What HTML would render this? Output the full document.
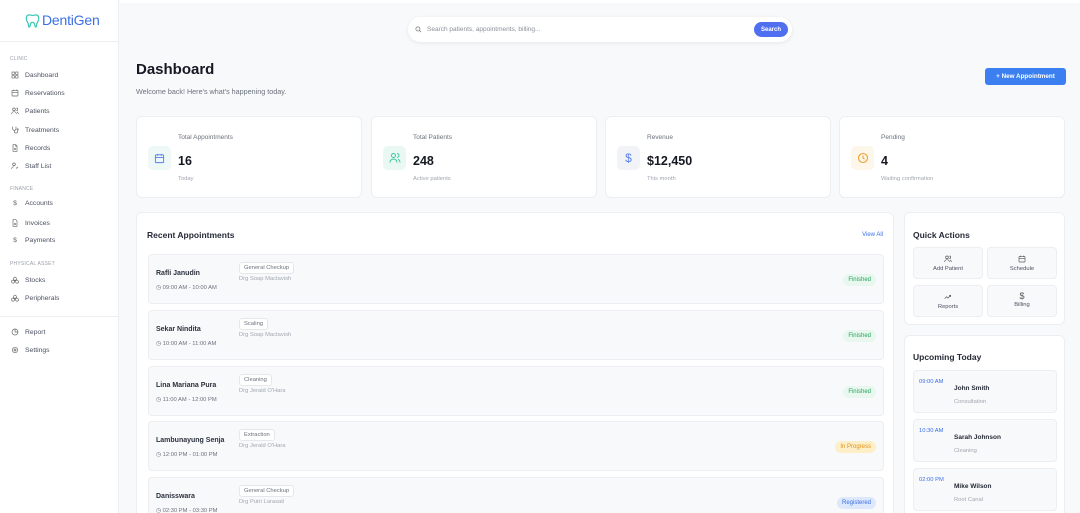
<!DOCTYPE html>
<html><head><meta charset="utf-8"><style>
*{box-sizing:border-box;margin:0;padding:0}
html,body{width:1080px;height:513px;overflow:hidden}
body{font-family:"Liberation Sans",sans-serif;background:#f8f9fb;position:relative;color:#1f2330}
.abs{position:absolute}
.sb{left:0;top:0;width:119px;height:513px;background:#fff;border-right:1px solid #eceef2}
.lbl{position:absolute;left:10px;font-size:5px;color:#9aa0aa;letter-spacing:.2px}
.it{position:absolute;left:11px;font-size:6.8px;color:#4b5160;display:flex;align-items:center;gap:6px}
.it svg{width:8px;height:8px}
.card{position:absolute;background:#fff;border:1px solid #eceef2;border-radius:6px}
.ib{position:absolute;left:11px;top:29px;width:23px;height:24px;border-radius:5px;display:flex;align-items:center;justify-content:center}
.sl{position:absolute;left:41px;top:17px;font-size:6.5px;color:#6b717d}
.sv{position:absolute;left:41px;top:37px;font-size:12.5px;font-weight:bold;color:#151822}
.ss{position:absolute;left:41px;top:59px;font-size:5.8px;color:#a1a6b0}
.row{position:absolute;left:11px;width:736px;height:50px;background:#f8f9fb;border:1px solid #eceef2;border-radius:4px}
.nm{position:absolute;left:7px;top:15px;font-size:7px;font-weight:bold;color:#2b303c}
.tm{position:absolute;left:7px;top:30px;font-size:5.8px;color:#6b717d;display:flex;align-items:center;gap:3px}
.tag{position:absolute;left:90px;top:7px;font-size:5.8px;color:#6b717d;background:#fff;border:1px solid #e5e7eb;border-radius:3px;padding:2px 4px}
.dr{position:absolute;left:90px;top:21px;font-size:5.8px;color:#a1a6b0}
.st{position:absolute;right:7px;top:19px;font-size:6px;padding:3px 5px;border-radius:7px}
.qa{position:absolute;width:70px;height:32px;background:#f8f9fb;border:1px solid #eceef2;border-radius:4px;font-size:5.8px;color:#4b5160;text-align:center}
.qa svg{display:block;margin:7px auto 3px;width:8px;height:8px}
.up{position:absolute;left:8px;width:144px;height:43px;background:#f8f9fb;border:1px solid #eceef2;border-radius:4px}
.ut{position:absolute;left:5px;top:8px;font-size:5.8px;color:#3b6fe6}
.un{position:absolute;left:40px;top:14px;font-size:6.5px;color:#252a36;font-weight:bold}
.us{position:absolute;left:40px;top:28px;font-size:5.8px;color:#a1a6b0}
</style></head><body>
<div class="abs sb">
 <div class="abs" style="left:25px;top:12px;display:flex;align-items:center;gap:2px">
  <svg width="15" height="15" viewBox="0 0 24 24" fill="none" stroke="#3cc9b5" stroke-width="2"><path d="M7 3c-3 0-5 2-5 6 0 3 2 5 3 8l1 5c1 1 2 0 2-1l1-4c.5-1.5 1.5-2 3-2s2.5.5 3 2l1 4c0 1 1 2 2 1l1-5c1-3 3-5 3-8 0-4-2-6-5-6-2 0-3 1-5 1S9 3 7 3z"/></svg>
  <span style="font-size:14px;color:#3b6fe6;letter-spacing:-.2px">DentiGen</span>
 </div>
 <div class="abs" style="left:0;top:41px;width:119px;border-top:1px solid #eceef2"></div>
 <div class="lbl" style="top:56px">CLINIC</div>
 <div class="it" style="top:71px"><svg viewBox="0 0 24 24" fill="none" stroke="#666" stroke-width="2"><rect x="3" y="3" width="7" height="7"/><rect x="14" y="3" width="7" height="7"/><rect x="3" y="14" width="7" height="7"/><rect x="14" y="14" width="7" height="7"/></svg>Dashboard</div>
 <div class="it" style="top:89px"><svg viewBox="0 0 24 24" fill="none" stroke="#666" stroke-width="2"><rect x="3" y="4" width="18" height="17" rx="2"/><path d="M3 10h18M8 2v4M16 2v4"/></svg>Reservations</div>
 <div class="it" style="top:107px"><svg viewBox="0 0 24 24" fill="none" stroke="#666" stroke-width="2"><circle cx="9" cy="7" r="4"/><path d="M2 21c0-4 3-7 7-7s7 3 7 7M16 3a4 4 0 010 8M22 21c0-3-2-6-4-6"/></svg>Patients</div>
 <div class="it" style="top:126px"><svg viewBox="0 0 24 24" fill="none" stroke="#666" stroke-width="2"><path d="M5 2v6a5 5 0 0010 0V2M10 13v3a5 5 0 0010 0v-3"/><circle cx="20" cy="10" r="2"/></svg>Treatments</div>
 <div class="it" style="top:144px"><svg viewBox="0 0 24 24" fill="none" stroke="#666" stroke-width="2"><path d="M14 2H6v20h12V6z"/><path d="M14 2v4h4M9 13h6M9 17h6"/></svg>Records</div>
 <div class="it" style="top:162px"><svg viewBox="0 0 24 24" fill="none" stroke="#666" stroke-width="2"><circle cx="9" cy="7" r="4"/><path d="M2 21c0-4 3-7 7-7M15 17l2 2 4-4"/></svg>Staff List</div>
 <div class="lbl" style="top:186px">FINANCE</div>
 <div class="it" style="top:200px"><span style="width:8px;text-align:center;color:#666">$</span>Accounts</div>
 <div class="it" style="top:219px"><svg viewBox="0 0 24 24" fill="none" stroke="#666" stroke-width="2"><path d="M14 2H6v20h12V6z"/><path d="M9 13h6M9 17h6"/></svg>Invoices</div>
 <div class="it" style="top:237px"><span style="width:8px;text-align:center;color:#666">$</span>Payments</div>
 <div class="lbl" style="top:261px">PHYSICAL ASSET</div>
 <div class="it" style="top:276px"><svg viewBox="0 0 24 24" fill="none" stroke="#666" stroke-width="2"><path d="M12 3l4 3v5l-4 3-4-3V6zM6 12l4 3v5l-4 2-4-3v-5zM18 12l4 3v5l-4 2-4-3v-5z"/></svg>Stocks</div>
 <div class="it" style="top:294px"><svg viewBox="0 0 24 24" fill="none" stroke="#666" stroke-width="2"><path d="M12 3l4 3v5l-4 3-4-3V6zM6 12l4 3v5l-4 2-4-3v-5zM18 12l4 3v5l-4 2-4-3v-5z"/></svg>Peripherals</div>
 <div class="abs" style="left:0;top:316px;width:119px;border-top:1px solid #eceef2"></div>
 <div class="it" style="top:328px"><svg viewBox="0 0 24 24" fill="none" stroke="#666" stroke-width="2"><circle cx="12" cy="12" r="9"/><path d="M12 3v9h9"/></svg>Report</div>
 <div class="it" style="top:346px"><svg viewBox="0 0 24 24" fill="none" stroke="#666" stroke-width="2"><circle cx="12" cy="12" r="3"/><circle cx="12" cy="12" r="8"/></svg>Settings</div>
</div>
<div class="abs" style="left:120px;top:0;width:960px;height:3px;background:#fff"></div>
<div class="abs" style="left:408px;top:17px;width:384px;height:25px;background:#fff;border-radius:13px;box-shadow:0 1px 4px rgba(0,0,0,.08)">
 <svg class="abs" style="left:7px;top:9px" width="7" height="7" viewBox="0 0 24 24" fill="none" stroke="#777" stroke-width="2.5"><circle cx="10" cy="10" r="7"/><path d="M15 15l6 6"/></svg>
 <div class="abs" style="left:19px;top:9px;font-size:6.5px;color:#8a8f99">Search patients, appointments, billing...</div>
 <div class="abs" style="left:346px;top:5px;width:34px;height:15px;background:#4f6ff0;border-radius:8px;color:#fff;font-size:6px;font-weight:bold;display:flex;align-items:center;justify-content:center">Search</div>
</div>
<div class="abs" style="left:136px;top:61px;font-size:15px;font-weight:bold;color:#151822">Dashboard</div>
<div class="abs" style="left:136px;top:87px;font-size:7.2px;color:#6b717d">Welcome back! Here's what's happening today.</div>
<div class="abs" style="left:985px;top:68px;width:81px;height:17px;background:#3b7ff0;border-radius:3px;color:#fff;font-size:6.3px;font-weight:bold;display:flex;align-items:center;justify-content:center">+ New Appointment</div>

<div class="card" style="left:136px;top:116px;width:226px;height:82px"><div class="ib" style="background:#eef8f6"><svg width="11" height="11" viewBox="0 0 24 24" fill="none" stroke="#4f7ef0" stroke-width="2"><rect x="3" y="4" width="18" height="17" rx="2"/><path d="M3 10h18M8 2v4M16 2v4"/></svg></div><div class="sl">Total Appointments</div><div class="sv">16</div><div class="ss">Today</div></div>
<div class="card" style="left:371px;top:116px;width:226px;height:82px"><div class="ib" style="background:#eaf8f4"><svg width="12" height="12" viewBox="0 0 24 24" fill="none" stroke="#3cc9a0" stroke-width="2"><circle cx="9" cy="7" r="4"/><path d="M2 21c0-4 3-7 7-7s7 3 7 7M16 3a4 4 0 010 8M22 21c0-3-2-6-4-6"/></svg></div><div class="sl">Total Patients</div><div class="sv">248</div><div class="ss">Active patients</div></div>
<div class="card" style="left:605px;top:116px;width:226px;height:82px"><div class="ib" style="background:#f1f3f7;color:#5b7ff0;font-size:12px">$</div><div class="sl">Revenue</div><div class="sv">$12,450</div><div class="ss">This month</div></div>
<div class="card" style="left:839px;top:116px;width:226px;height:82px"><div class="ib" style="background:#fdf6ea"><svg width="12" height="12" viewBox="0 0 24 24" fill="none" stroke="#f0a030" stroke-width="2.2"><circle cx="12" cy="12" r="9"/><path d="M12 7v5l3 2"/></svg></div><div class="sl">Pending</div><div class="sv">4</div><div class="ss">Waiting confirmation</div></div>

<div class="card" style="left:136px;top:212px;width:758px;height:310px">
 <div class="abs" style="left:10px;top:17px;font-size:8.5px;font-weight:bold;color:#252a36">Recent Appointments</div>
 <div class="abs" style="right:10px;top:19px;font-size:6px;color:#3b6fe6">View All</div>
 <div class="row" style="top:41px"><div class="nm">Rafli Janudin</div><div class="tm">◷ 09:00 AM - 10:00 AM</div><div class="tag">General Checkup</div><div class="dr">Drg Soap Mactavish</div><div class="st" style="background:#e9f8ef;color:#22a35a">Finished</div></div>
 <div class="row" style="top:97px"><div class="nm">Sekar Nindita</div><div class="tm">◷ 10:00 AM - 11:00 AM</div><div class="tag">Scaling</div><div class="dr">Drg Soap Mactavish</div><div class="st" style="background:#e9f8ef;color:#22a35a">Finished</div></div>
 <div class="row" style="top:153px"><div class="nm">Lina Mariana Pura</div><div class="tm">◷ 11:00 AM - 12:00 PM</div><div class="tag">Cleaning</div><div class="dr">Drg Jerald O'Hara</div><div class="st" style="background:#e9f8ef;color:#22a35a">Finished</div></div>
 <div class="row" style="top:208px"><div class="nm">Lambunayung Senja</div><div class="tm">◷ 12:00 PM - 01:00 PM</div><div class="tag">Extraction</div><div class="dr">Drg Jerald O'Hara</div><div class="st" style="background:#fdefc8;color:#e0901a">In Progress</div></div>
 <div class="row" style="top:264px"><div class="nm">Danisswara</div><div class="tm">◷ 02:30 PM - 03:30 PM</div><div class="tag">General Checkup</div><div class="dr">Drg Putri Larasati</div><div class="st" style="background:#dde8fb;color:#3b6fe6">Registered</div></div>
</div>

<div class="card" style="left:904px;top:212px;width:161px;height:113px">
 <div class="abs" style="left:8px;top:17px;font-size:8.5px;font-weight:bold;color:#252a36">Quick Actions</div>
 <div class="qa" style="left:8px;top:34px"><svg viewBox="0 0 24 24" fill="none" stroke="#555" stroke-width="2"><circle cx="9" cy="7" r="4"/><path d="M2 21c0-4 3-7 7-7s7 3 7 7M16 3a4 4 0 010 8M22 21c0-3-2-6-4-6"/></svg>Add Patient</div>
 <div class="qa" style="left:82px;top:34px"><svg viewBox="0 0 24 24" fill="none" stroke="#555" stroke-width="2"><rect x="3" y="4" width="18" height="17" rx="2"/><path d="M3 10h18M8 2v4M16 2v4"/></svg>Schedule</div>
 <div class="qa" style="left:8px;top:72px"><svg viewBox="0 0 24 24" fill="none" stroke="#555" stroke-width="2"><path d="M2 17l6-6 4 4 8-8M15 7h5v5"/></svg>Reports</div>
 <div class="qa" style="left:82px;top:72px"><div style="margin:5px auto 1px;font-size:9px;color:#555">$</div>Billing</div>
</div>
<div class="card" style="left:904px;top:335px;width:161px;height:190px">
 <div class="abs" style="left:8px;top:16px;font-size:8.5px;font-weight:bold;color:#252a36">Upcoming Today</div>
 <div class="up" style="top:34px"><div class="ut">09:00 AM</div><div class="un">John Smith</div><div class="us">Consultation</div></div>
 <div class="up" style="top:83px"><div class="ut">10:30 AM</div><div class="un">Sarah Johnson</div><div class="us">Cleaning</div></div>
 <div class="up" style="top:132px"><div class="ut">02:00 PM</div><div class="un">Mike Wilson</div><div class="us">Root Canal</div></div>
</div>
</body></html>
